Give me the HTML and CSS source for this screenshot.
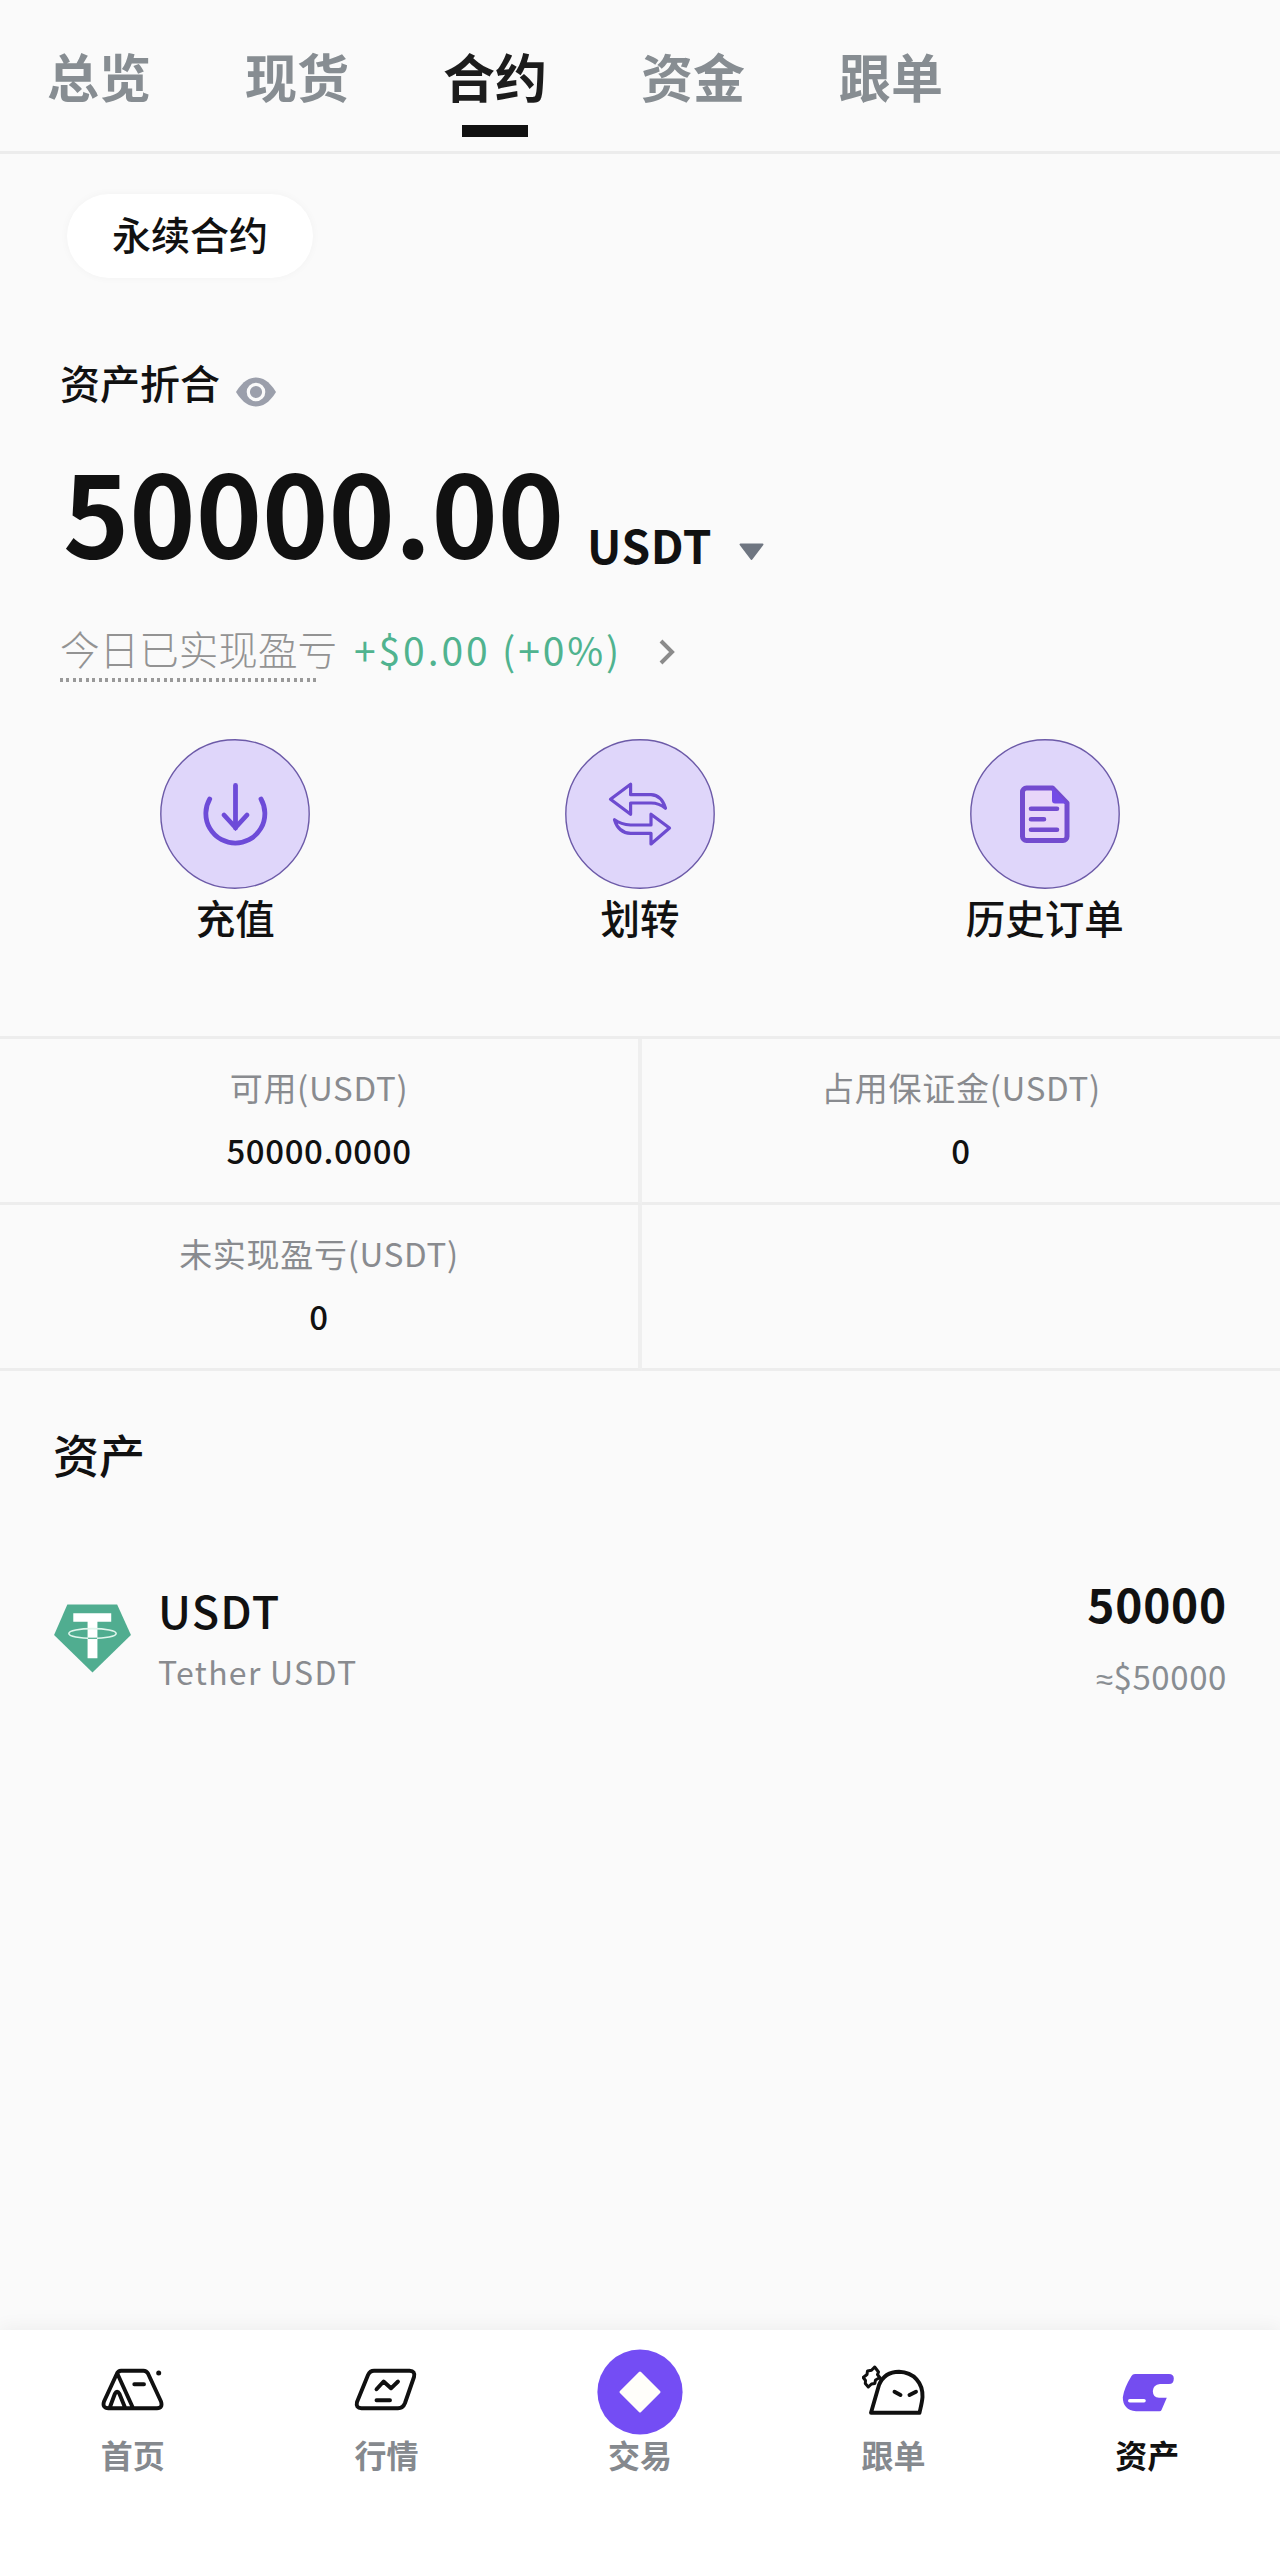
FILE: index.html
```html
<!DOCTYPE html>
<html lang="zh-CN">
<head>
<meta charset="utf-8">
<title>资产 - 合约</title>
<link rel="stylesheet" href="styles.css">
</head>
<body>
<div class="app">
  <header class="tabs">
    <a class="tab">总览</a>
    <a class="tab">现货</a>
    <a class="tab tab-active">合约</a>
    <a class="tab">资金</a>
    <a class="tab">跟单</a>
  </header>

  <main class="content">
    <div class="pill">永续合约</div>

    <section class="summary">
      <div class="summary-title">
        <span>资产折合</span>
        <svg class="eye" viewBox="0 0 42 30"><path d="M1 15C8 3.500 15 .5 21 .5S34 3.500 41 15C34 26.500 27 29.500 21 29.500S8 26.500 1 15Z" fill="#9b9fab"/><circle cx="21" cy="15" r="7.700" fill="none" stroke="#fafafa" stroke-width="3.200"/></svg>
      </div>
      <div class="balance">
        <span class="amount">50000.00</span>
        <span class="unit">USDT</span>
        <svg class="caret" viewBox="0 0 27 18"><path d="M2.500 1.500h22L13.500 16Z" fill="#6f7681" stroke="#6f7681" stroke-width="2" stroke-linejoin="round"/></svg>
      </div>
      <div class="pnl">
        <span class="pnl-label">今日已实现盈亏</span>
        <span class="pnl-value">+$0.00 (+0%)</span>
        <svg class="chevron" viewBox="0 0 18 28"><path d="M3 3l11 11L3 25" fill="none" stroke="#8b8b8b" stroke-width="4"/></svg>
      </div>
    </section>

    <section class="actions">
      <div class="action">
        <svg class="action-icon" viewBox="0 0 150 150">
          <circle cx="75" cy="75" r="74.200" fill="#dfd6fa" stroke="#6c5aa8" stroke-width="1.400"/>
          <g fill="none" stroke="#6d4bd8" stroke-width="4.800" stroke-linecap="round"><path d="M49.700 60A29.500 29.500 0 1 0 101 60"/><path d="M75.500 46.500V89"/><path d="M64 76l11.500 12.500L87 76"/></g>
        </svg>
        <span>充值</span>
      </div>
      <div class="action">
        <svg class="action-icon" viewBox="0 0 150 150">
          <circle cx="75" cy="75" r="74.200" fill="#dfd6fa" stroke="#6c5aa8" stroke-width="1.400"/>
          <g fill="none" stroke="#6d4bd0" stroke-width="3.200" stroke-linejoin="round"><path d="M45.500 60.300L65.600 45.300V55.700H86C93 56 98 61 100.500 69.300C96 65.500 91 64 86 64H65.600V75.300Z"/><path d="M104.500 89L86 75.300V86H65.600C58 85.500 54 84 49.500 80.700C52 89 57 94 65.600 94.300H86V105Z"/></g>
        </svg>
        <span>划转</span>
      </div>
      <div class="action">
        <svg class="action-icon" viewBox="0 0 150 150">
          <circle cx="75" cy="75" r="74.200" fill="#dfd6fa" stroke="#6c5aa8" stroke-width="1.400"/>
          <path d="M56.500 49H82.500L97 64V97.500a4 4 0 0 1-4 4H56.500a4 4 0 0 1-4-4V53a4 4 0 0 1 4-4Z" fill="#e8d6f9" stroke="#734ccf" stroke-width="5" stroke-linejoin="round"/>
          <path d="M82 48V61.500a3 3 0 0 0 3 3H97Z" fill="#734be6"/>
          <path d="M61 69.700H87M61 80.200H74M61 90.700H87" stroke="#734ccf" stroke-width="4.600" stroke-linecap="round"/>
        </svg>
        <span>历史订单</span>
      </div>
    </section>

    <section class="stats">
      <div class="stat"><span class="stat-label">可用(USDT)</span><span class="stat-value">50000.0000</span></div>
      <div class="stat"><span class="stat-label">占用保证金(USDT)</span><span class="stat-value">0</span></div>
      <div class="stat"><span class="stat-label">未实现盈亏(USDT)</span><span class="stat-value">0</span></div>
      <div class="stat"></div>
    </section>

    <section class="assets">
      <h2 class="assets-title">资产</h2>
      <div class="asset">
        <svg class="asset-logo" viewBox="0 0 80 70">
          <path d="M14.500 .5H65L79 31.500L40 69.500L1 31.500Z" fill="#50ad90"/>
          <path d="M20.500 9.500H59V18H45V55H35V18H20.500Z" fill="#fff"/>
          <ellipse cx="40" cy="30" rx="24" ry="5" fill="none" stroke="#dff5ec" stroke-width="1.600"/>
          <path d="M35.500 34.800H44.500" stroke="#50ad90" stroke-width="1.200"/>
        </svg>
        <div class="asset-name"><span class="asset-symbol">USDT</span><span class="asset-full">Tether USDT</span></div>
        <div class="asset-amount"><span class="asset-qty">50000</span><span class="asset-fiat"><span class="approx">≈</span>$50000</span></div>
      </div>
    </section>
  </main>

  <nav class="nav">
    <a class="nav-item">
      <svg class="nav-icon" viewBox="0 0 64 64" fill="none" stroke="#101010" stroke-width="3.900" stroke-linecap="round" stroke-linejoin="round"><path d="M20 10.700H42.500Q45.500 10.700 47 13.500L60 41.500Q62 48.200 56 48.200H7.500Q1 48.200 3 41.500L15.500 14.500Q17 10.700 20 10.700ZM16.300 13.500L32 48M8.800 47.500L13.800 34Q16.100 29.500 18.500 34L24 47.500M33.300 24.200H43"/><circle cx="57.700" cy="13" r="2.500" fill="#101010" stroke="none"/></svg>
      <span>首页</span>
    </a>
    <a class="nav-item">
      <svg class="nav-icon" viewBox="0 0 64 64" fill="none" stroke="#101010" stroke-width="3.900" stroke-linecap="round" stroke-linejoin="round"><path d="M20 10.700H55.500Q61.500 11 60 17L51 43Q49 48.200 44 48.200H7.500Q1.500 48.200 3 42L14 15Q16 10.700 20 10.700ZM22.500 29.300L29.600 21.500L37 28.300L44 21.500M22.500 40.200H36"/></svg>
      <span>行情</span>
    </a>
    <a class="nav-item">
      <svg class="nav-trade" viewBox="0 0 86 86"><circle cx="43" cy="43" r="42.600" fill="#744df4"/><path d="M43 24L62 43L43 62L24 43Z" fill="#fffefa" stroke="#fffefa" stroke-width="3" stroke-linejoin="round"/></svg>
      <span>交易</span>
    </a>
    <a class="nav-item">
      <svg class="nav-icon" viewBox="0 0 64 64" fill="none" stroke="#101010" stroke-width="3.900" stroke-linecap="round" stroke-linejoin="round"><path d="M9 52.800L17 25C21 15.500 28 11.800 37 11.800C52 12.300 61 23 60.500 37C60 43 58.500 48 57.500 52.800ZM32.500 31.700L38.500 35M47.500 35L54 31.700"/><path d="M19.500 20L15.500 14.500L16.500 12L12.700 7L9.500 10.300L5.500 11L5 14.500L1.200 17.500L3.500 20.500L3.300 23.500L6.300 27L9.500 24L12.800 23.500L13.500 20L18 17.500" stroke-width="3"/></svg>
      <span>跟单</span>
    </a>
    <a class="nav-item nav-active">
      <svg class="nav-icon" viewBox="0 0 64 64"><path d="M20 14H54Q58.800 14 58.800 18.500Q58.800 24 54 24H45Q38 25 37.800 31Q38 37.700 44 37.700H51.800L46.500 50Q46 51.300 44.500 51.300H21Q7.800 50 7.800 37.300Q9 28 16.500 16Q17.500 14 20 14Z" fill="#744df0"/><path d="M14.800 40.700H29" stroke="#fff" stroke-width="3.600" stroke-linecap="round"/></svg>
      <span>资产</span>
    </a>
  </nav>
</div>
</body>
</html>
```
FILE: styles.css
```css
* { box-sizing: border-box; }

body {
  margin: 0;
  background: #fafafa;
  color: #111;
  font-family: "Noto Sans CJK SC", "Noto Sans", sans-serif;
}

svg { display: block; flex: none; }

.app {
  width: 1280px;
  height: 2568px;
  display: flex;
  flex-direction: column;
  overflow: hidden;
}

.tabs {
  height: 154px;
  padding: 46px 47px 0;
  display: flex;
  gap: 94px;
  border-bottom: 3px solid #ececec;
}

.tab {
  height: 91px;
  font-size: 52px;
  line-height: 60px;
  font-weight: 700;
  color: #878d92;
  display: flex;
  flex-direction: column;
  align-items: center;
  justify-content: space-between;
}

.tab-active { color: #1c1c1c; }

.tab-active::after {
  content: "";
  width: 66px;
  height: 12px;
  background: #111;
}

.content { flex: 1; }

.pill {
  width: 246px;
  height: 84px;
  margin: 40px 0 0 67px;
  border-radius: 42px;
  background: #fff;
  box-shadow: 0 0 8px rgba(0, 0, 0, .035);
  text-align: center;
  font-size: 39px;
  line-height: 79px;
  font-weight: 500;
}

.summary { padding: 79px 60px 0; }

.summary-title {
  display: flex;
  align-items: flex-end;
  gap: 15px;
  font-size: 40px;
  line-height: 50px;
  font-weight: 500;
}

.eye { width: 42px; height: 30px; }

.balance {
  margin-top: 42px;
  display: flex;
  align-items: flex-end;
}

.amount {
  width: 527px;
  padding-left: 3px;
  font-size: 112.5px;
  line-height: 120px;
  font-weight: 700;
}

.unit {
  width: 151px;
  font-size: 46px;
  line-height: 50px;
  font-weight: 600;
  letter-spacing: .6px;
}

.caret { width: 27px; height: 18px; margin-bottom: 8px; }

.pnl {
  margin-top: 54px;
  display: flex;
  align-items: flex-start;
  font-size: 39.6px;
  line-height: 50px;
  font-weight: 300;
}

.pnl-label {
  width: 294px;
  height: 60px;
  color: #939393;
  background: repeating-linear-gradient(90deg, #999 0 3px, transparent 3px 6.500px) 0 55px / 260px 4px no-repeat;
}

.pnl-value {
  width: 304px;
  padding-top: 1px;
  color: #50b38f;
  font-weight: 400;
  font-size: 39px;
  letter-spacing: 2.900px;
  white-space: nowrap;
}

.chevron { width: 18px; height: 28px; margin-top: 15px; }

.actions {
  margin-top: 56px;
  padding: 0 33px;
  display: grid;
  grid-template-columns: repeat(3, 1fr);
}

.action {
  display: flex;
  flex-direction: column;
  align-items: center;
  gap: 3px;
  font-size: 39.5px;
  line-height: 50px;
  font-weight: 500;
}

.action-icon { width: 150px; height: 150px; }

.stats {
  margin-top: 94px;
  display: grid;
  grid-template-columns: 642px 638px;
  grid-auto-rows: 166px;
  border-top: 3px solid #ededed;
}

.stat {
  padding-top: 28px;
  display: flex;
  flex-direction: column;
  align-items: center;
  gap: 23px;
  line-height: 40px;
  font-size: 33px;
  border-bottom: 3px solid #ededed;
}

.stat:nth-child(odd) { border-right: 4px solid #efefef; }

.stat-label { color: #898b8f; letter-spacing: .7px; }

.stat-value { font-weight: 500; letter-spacing: .6px; }

.assets { padding: 52px 53px 0; }

.assets-title {
  margin: 0;
  font-size: 46px;
  line-height: 60px;
  font-weight: 500;
}

.asset {
  margin-top: 95px;
  display: flex;
  align-items: flex-start;
}

.asset-logo { width: 79px; height: 69px; margin-top: 26px; }

.asset-name {
  flex: 1;
  padding: 7px 0 0 26px;
  display: flex;
  flex-direction: column;
  gap: 16px;
}

.asset-symbol { font-size: 45px; line-height: 50px; font-weight: 500; letter-spacing: 1.200px; }

.asset-full { font-size: 32px; line-height: 40px; letter-spacing: 1.300px; color: #898b8f; }

.asset-amount {
  display: flex;
  flex-direction: column;
  align-items: flex-end;
  gap: 28px;
}

.asset-qty { font-size: 46px; line-height: 50px; font-weight: 700; letter-spacing: .8px; }

.asset-fiat { font-size: 33px; line-height: 40px; letter-spacing: .6px; color: #888d92; }

.approx { font-family: "Noto Sans", sans-serif; font-size: 31px; line-height: 1; }

.nav {
  height: 238px;
  padding: 19px 6px 0;
  display: grid;
  grid-template-columns: repeat(5, 1fr);
  background: #fff;
  box-shadow: 0 -2px 18px rgba(0, 0, 0, .055);
}

.nav-item {
  height: 128px;
  display: flex;
  flex-direction: column;
  align-items: center;
  font-size: 32px;
  line-height: 38px;
  font-weight: 600;
  color: #85898e;
}

.nav-icon { width: 64px; height: 64px; margin: 11px 0; }

.nav-trade { width: 86px; height: 86px; }

.nav-active { color: #111; }
```
